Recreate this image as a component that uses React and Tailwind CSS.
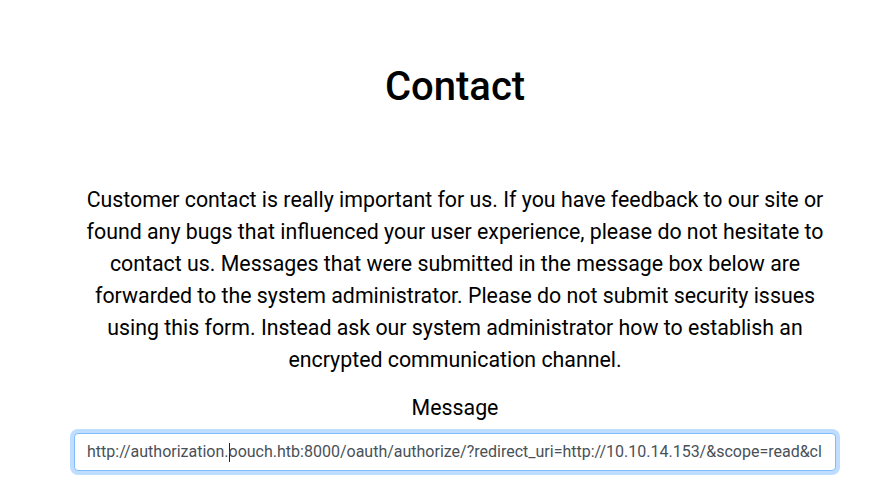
export default function App() {
  return (
    <div className="min-h-[491px] bg-white text-[#212529]" style={{ fontFamily: "Roboto, 'Liberation Sans', sans-serif" }}>
      <div className="ml-[74px] w-[762px] flex flex-col items-center">
        <h1 className="mt-[63px] text-[40px] leading-[48px] font-medium text-black">Contact</h1>
        <p className="mt-[73px] text-[21.33px] leading-[32px] text-center text-black">
          Customer contact is really important for us. If you have feedback to our site or found any bugs that influenced your user experience, please do not hesitate to contact us. Messages that were submitted in the message box below are forwarded to the system administrator. Please do not submit security issues using this form. Instead ask our system administrator how to establish an encrypted communication channel.
        </p>
        <div className="mt-[17px] text-[21.33px] leading-[30px] text-black">Message</div>
        <div className="mt-[10px] w-full h-[38px] rounded-[4px] border border-[#80bdff] shadow-[0_0_0_4px_rgba(0,123,255,0.25)] bg-white px-[12px] flex items-center text-[16px] text-[#495057]">
          <div className="w-full overflow-hidden whitespace-nowrap">
            <span>http://authorization.</span>
            <span className="inline-block w-0 h-[19px] align-middle border-l border-[#222] -mr-px"></span>
            <span>oouch.htb:8000/oauth/authorize/?redirect_uri=http://10.10.14.153/&amp;scope=read&amp;client_id=UDBtC8HhZI18nJ53kJVJpXp4IIkhMY4pI9bmI0fs</span>
          </div>
        </div>
      </div>
    </div>
  );
}
